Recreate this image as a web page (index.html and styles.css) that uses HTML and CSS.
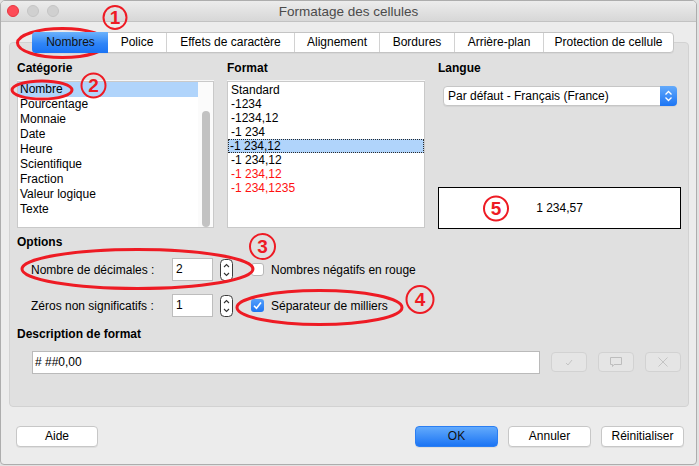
FILE: index.html
```html
<!DOCTYPE html>
<html lang="fr">
<head>
<meta charset="utf-8">
<title>Formatage des cellules</title>
<link rel="stylesheet" href="styles.css">
</head>
<body>
<div class="window">
  <div class="titlebar">
    <div class="lights">
      <span class="light red"></span><span class="light"></span><span class="light"></span>
    </div>
    <div class="title">Formatage des cellules</div>
    <div></div>
  </div>
  <div class="content">
    <div class="tabbar">
      <div class="tab active">Nombres</div>
      <div class="tab">Police</div>
      <div class="tab">Effets de caractère</div>
      <div class="tab">Alignement</div>
      <div class="tab">Bordures</div>
      <div class="tab">Arrière-plan</div>
      <div class="tab">Protection de cellule</div>
    </div>
    <div class="panel">
      <div class="columns">
        <div class="col">
          <div class="label">Catégorie</div>
          <div class="listbox cat">
            <div class="items">
              <div class="item sel">Nombre</div>
              <div class="item">Pourcentage</div>
              <div class="item">Monnaie</div>
              <div class="item">Date</div>
              <div class="item">Heure</div>
              <div class="item">Scientifique</div>
              <div class="item">Fraction</div>
              <div class="item">Valeur logique</div>
              <div class="item">Texte</div>
            </div>
            <div class="scroll"><div class="thumb"></div></div>
          </div>
        </div>
        <div class="col">
          <div class="label">Format</div>
          <div class="listbox fmt">
            <div class="items">
              <div class="item">Standard</div>
              <div class="item">-1234</div>
              <div class="item">-1234,12</div>
              <div class="item">-1 234</div>
              <div class="item sel">-1 234,12</div>
              <div class="item">-1 234,12</div>
              <div class="item red">-1 234,12</div>
              <div class="item red">-1 234,1235</div>
            </div>
          </div>
        </div>
        <div class="col lang">
          <div class="label">Langue</div>
          <div class="select">
            <span class="select-text">Par défaut - Français (France)</span>
            <span class="select-btn">
              <svg width="17" height="18" viewBox="0 0 17 18"><path d="M5.5 7.5 L8.5 4.5 L11.5 7.5 M5.5 10.5 L8.5 13.5 L11.5 10.5" fill="none" stroke="#fff" stroke-width="1.3"/></svg>
            </span>
          </div>
          <div class="preview">1 234,57</div>
        </div>
      </div>

      <div class="label options-label">Options</div>
      <div class="opt-row first">
        <span class="opt-label">Nombre de décimales :</span>
        <span class="spin-field">2</span>
        <span class="spinner"><svg width="13" height="22" viewBox="0 0 13 22"><rect x="0.5" y="0.5" width="12" height="21" rx="4" fill="#fff" stroke="#3c3c3c"/><path d="M4 8 L6.5 5.5 L9 8 M4 14 L6.5 16.5 L9 14" fill="none" stroke="#333" stroke-width="1.1"/></svg></span>
        <span class="check"></span>
        <span class="check-text">Nombres négatifs en rouge</span>
      </div>
      <div class="opt-row second">
        <span class="opt-label">Zéros non significatifs :</span>
        <span class="spin-field">1</span>
        <span class="spinner"><svg width="13" height="22" viewBox="0 0 13 22"><rect x="0.5" y="0.5" width="12" height="21" rx="4" fill="#fff" stroke="#3c3c3c"/><path d="M4 8 L6.5 5.5 L9 8 M4 14 L6.5 16.5 L9 14" fill="none" stroke="#333" stroke-width="1.1"/></svg></span>
        <span class="check checked"><svg width="13" height="13" viewBox="0 0 13 13"><path d="M3 6.8 L5.5 9.3 L10 3.6" fill="none" stroke="#fff" stroke-width="1.6"/></svg></span>
        <span class="check-text">Séparateur de milliers</span>
      </div>

      <div class="label desc-label">Description de format</div>
      <div class="desc-row">
        <div class="desc-input"># ##0,00</div>
        <span class="icon-btn"><svg width="14" height="12" viewBox="0 0 14 12"><path d="M4 7 L6 9 L10 4" fill="none" stroke="#c4c4c4" stroke-width="1"/></svg></span>
        <span class="icon-btn"><svg width="16" height="14" viewBox="0 0 16 14"><path d="M2.5 2.5 H13.5 V9.5 H6 L4.5 11.5 V9.5 H2.5 Z" fill="none" stroke="#bdbdbd" stroke-width="1"/></svg></span>
        <span class="icon-btn"><svg width="14" height="14" viewBox="0 0 14 14"><path d="M2.5 2.5 L11.5 11.5 M11.5 2.5 L2.5 11.5" fill="none" stroke="#c4c4c4" stroke-width="1"/></svg></span>
      </div>
    </div>

    <div class="buttons">
      <span class="btn help">Aide</span>
      <span class="spacer"></span>
      <span class="btn primary">OK</span>
      <span class="btn">Annuler</span>
      <span class="btn">Réinitialiser</span>
    </div>
  </div>

  <svg class="annotations" width="699" height="466" viewBox="0 0 699 466">
    <g fill="none" stroke="#ee1b24" stroke-width="3">
      <ellipse cx="62.5" cy="43" rx="45" ry="14.5"/>
      <ellipse cx="42" cy="90" rx="30" ry="9"/>
      <ellipse cx="137.5" cy="269" rx="115.5" ry="19.5"/>
      <ellipse cx="319.5" cy="307.5" rx="82.5" ry="17"/>
    </g>
    <g fill="none" stroke="#ee1b24" stroke-width="2">
      <circle cx="115" cy="17.5" r="11.5"/>
      <circle cx="93.5" cy="85.5" r="12"/>
      <circle cx="262.5" cy="246.5" r="12.5"/>
      <circle cx="420" cy="299.5" r="13.5"/>
      <circle cx="496" cy="208.5" r="12"/>
    </g>
    <g class="num" fill="#ee1b24" text-anchor="middle">
      <text x="115" y="24">1</text>
      <text x="93.5" y="92">2</text>
      <text x="262.5" y="253">3</text>
      <text x="420" y="306">4</text>
      <text x="496" y="215">5</text>
    </g>
  </svg>
</div>
</body>
</html>
```

FILE: styles.css
```css
html, body {
  margin: 0;
  padding: 0;
}

body {
  width: 699px;
  height: 466px;
  background: #e2e2e2;
  font-family: "Liberation Sans", Arial, sans-serif;
  font-size: 12px;
  color: #000;
  overflow: hidden;
}

.window {
  position: relative;
  width: 697px;
  height: 465px;
  box-sizing: border-box;
  border: 1px solid #adadad;
  border-radius: 5px 5px 4px 4px;
  background: #ececec;
  display: flex;
  flex-direction: column;
  overflow: hidden;
}

/* Title bar */
.titlebar {
  height: 20px;
  border-bottom: 1px solid #c2c2c2;
  background: linear-gradient(#ececec, #d7d7d7);
  display: grid;
  grid-template-columns: 1fr auto 1fr;
  align-items: center;
}

.lights {
  display: flex;
  gap: 8px;
  padding-left: 6px;
}

.light {
  width: 12px;
  height: 12px;
  box-sizing: border-box;
  border-radius: 50%;
  background: #d0d0d0;
  border: 1px solid #c4c4c4;
}

.light.red {
  background: #fd4b57;
  border-color: #e6353f;
}

.title {
  font-size: 13.5px;
  color: #4b4b4b;
}

/* Content */
.content {
  flex: 1;
  display: flex;
  flex-direction: column;
}

.tabbar {
  position: relative;
  z-index: 1;
  align-self: flex-start;
  display: flex;
  margin: 10px 0 0 31px;
  background: #fff;
  border: 1px solid #c4c4c4;
  border-radius: 4px;
  box-shadow: 0 1px 0 rgba(0, 0, 0, 0.04);
}

.tab {
  box-sizing: border-box;
  text-align: center;
  line-height: 19px;
  border-left: 1px solid #d2d2d2;
  white-space: nowrap;
}

.tab:nth-child(1) { width: 75px; border-left: none; }
.tab:nth-child(2) { width: 58px; }
.tab:nth-child(3) { width: 128px; }
.tab:nth-child(4) { width: 85px; }
.tab:nth-child(5) { width: 75px; }
.tab:nth-child(6) { width: 89px; }
.tab:nth-child(7) { width: 130px; }

.tab.active {
  margin: -1px 0 -1px -1px;
  padding: 1px 0 1px 1px;
  width: 76px;
  border-radius: 4px 0 0 4px;
  background: linear-gradient(#6cb2fb, #2f85f7 55%, #1a73f4);
  color: #111;
}

.tab.active + .tab {
  border-left: none;
}

.panel {
  height: 365px;
  box-sizing: border-box;
  margin: -11px 7px 0 8px;
  padding: 18px 7px 0 7px;
  background: #e0e0e0;
  border: 1px solid #d2d2d2;
  border-radius: 4px;
}

.columns {
  display: grid;
  grid-template-columns: 197px 198px 1fr;
  column-gap: 13px;
}

.col {
  display: flex;
  flex-direction: column;
}

.label {
  font-weight: bold;
  line-height: 14px;
  height: 14px;
}

.listbox {
  margin-top: 6px;
  height: 147px;
  box-sizing: border-box;
  background: #fff;
  border: 1px solid #c9c9c9;
  box-shadow: 0 -1px 0 #f6f6f6;
  display: flex;
}

.items {
  flex: 1;
}

.cat .item {
  line-height: 15px;
  padding-left: 2px;
}

.item.sel {
  background: #b0d4fb;
}

.scroll {
  width: 15px;
  padding-top: 29px;
  box-sizing: border-box;
  display: flex;
  justify-content: center;
  background: #fbfbfb;
}

.thumb {
  width: 8px;
  border-radius: 4px;
  background: #c2c2c2;
}

.fmt .items {
  padding-top: 1px;
}

.fmt .item {
  line-height: 14px;
  padding-left: 3px;
}

.fmt .item.sel {
  line-height: 12px;
  border: 1px dotted #2a2a2a;
  padding-left: 1px;
}

.item.red {
  color: #ff1010;
}

/* Langue column */
.select {
  margin: 11px 4px 0 5px;
  height: 20px;
  box-sizing: border-box;
  border: 1px solid #c6c6c6;
  border-radius: 4px;
  background: #fff;
  display: flex;
  box-shadow: 0 1px 1px rgba(0, 0, 0, 0.06);
}

.select-text {
  flex: 1;
  padding-left: 4px;
  line-height: 18px;
}

.select-btn {
  width: 17px;
  margin: -1px -1px -1px 0;
  border-radius: 0 4px 4px 0;
  background: linear-gradient(#63aafb, #1c75f4);
  display: flex;
  align-items: center;
  justify-content: center;
}

.preview {
  margin-top: auto;
  margin-bottom: -1px;
  height: 42px;
  box-sizing: border-box;
  border: 1px solid #000;
  background: #fff;
  display: flex;
  align-items: center;
  justify-content: center;
}

/* Options */
.options-label {
  margin-top: 7px;
}

.opt-row {
  display: flex;
  align-items: center;
  height: 23px;
  padding-left: 14px;
}

.opt-row.first {
  margin-top: 9px;
}

.opt-row.second {
  margin-top: 13px;
}

.opt-label {
  width: 141px;
}

.spin-field {
  width: 41px;
  height: 23px;
  box-sizing: border-box;
  border: 1px solid #bdbdbd;
  background: #fff;
  padding-left: 3px;
  line-height: 21px;
}

.spinner {
  margin-left: 7px;
  display: flex;
}

.check {
  margin-left: 18px;
  width: 13px;
  height: 13px;
  box-sizing: border-box;
  border: 1px solid #b8b8b8;
  border-radius: 3px;
  background: #fff;
  display: flex;
}

.check.checked {
  border: none;
  background: linear-gradient(#55a0fa, #1d75f4);
}

.check-text {
  margin-left: 7px;
}

/* Description */
.desc-label {
  margin-top: 10px;
}

.desc-row {
  margin-top: 10px;
  padding-left: 15px;
  display: flex;
  align-items: flex-start;
}

.desc-input {
  width: 510px;
  height: 23px;
  box-sizing: border-box;
  border: 1px solid #bababa;
  background: #fff;
  padding-left: 2px;
  line-height: 21px;
}

.icon-btn {
  margin: 1px 0 0 11px;
  width: 36px;
  height: 20px;
  box-sizing: border-box;
  border: 1px solid #d2d2d2;
  border-radius: 4px;
  background: #e5e5e5;
  display: flex;
  align-items: center;
  justify-content: center;
}

/* Bottom buttons */
.buttons {
  display: flex;
  gap: 10px;
  margin: 19px 12px 0 15px;
}

.spacer {
  flex: 1;
}

.btn {
  width: 83px;
  height: 21px;
  box-sizing: border-box;
  border: 1px solid #c7c7c7;
  border-radius: 4px;
  background: #fff;
  box-shadow: 0 1px 0 rgba(0, 0, 0, 0.06);
  text-align: center;
  line-height: 19px;
}

.btn.help {
  width: 82px;
}

.btn.primary {
  border-color: #2b7ef2;
  background: linear-gradient(#62aafc, #1b74f4);
  color: #111;
}

/* Red annotations drawn over the dialog */
.annotations {
  position: absolute;
  left: -1px;
  top: -1px;
  pointer-events: none;
}

.num {
  font-family: "Liberation Sans", Arial, sans-serif;
  font-size: 19px;
  font-weight: bold;
}
```
